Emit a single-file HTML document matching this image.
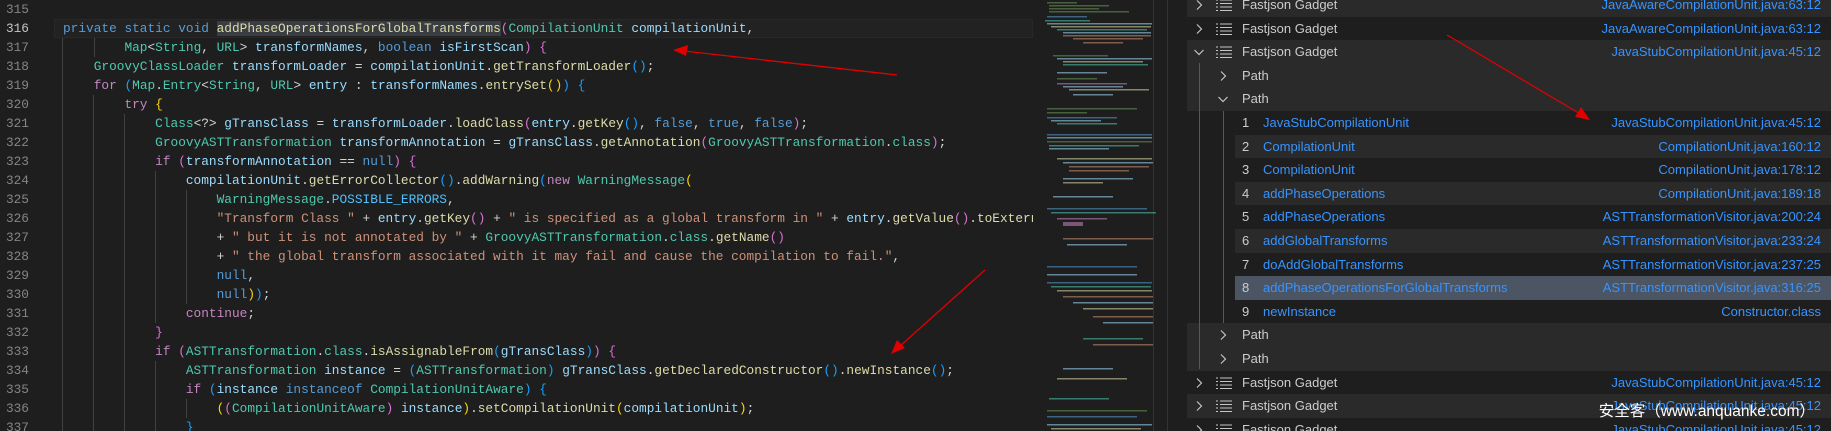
<!DOCTYPE html>
<html><head><meta charset="utf-8">
<style>
*{margin:0;padding:0;box-sizing:border-box}
body{width:1831px;height:431px;overflow:hidden;background:#1e1e1e;position:relative;font-family:"Liberation Sans",sans-serif}
#ed{position:absolute;left:0;top:0;width:1033px;height:431px;overflow:hidden;background:#1e1e1e}
.ln{position:absolute;left:0;width:29px;text-align:right;font:12.8px/19px "Liberation Mono",monospace;color:#858585}
.cl{position:absolute;left:63px;white-space:pre;font:12.8px/19px "Liberation Mono",monospace;color:#d4d4d4}
.g{position:absolute;width:1px;height:19px;background:#404040}
.k{color:#569cd6}.c{color:#c586c0}.t{color:#4ec9b0}.v{color:#9cdcfe}.f{color:#dcdcaa}.s{color:#ce9178}.n{color:#4fc1ff}
.b1{color:#ffd700}.b2{color:#da70d6}.b3{color:#179fff}
.sel{background:#3a3d41}
#mm{position:absolute;left:1033px;top:0;width:154px;height:431px;background:#1e1e1e}
#pn{position:absolute;left:1187px;top:0;width:644px;height:431px;background:#1e1e1e;overflow:hidden}
.r{position:absolute;left:0;width:644px;height:23.6px;font-size:13px;line-height:23.6px;color:#cccccc}
.lt{background:#2a2a2a}
.r .tx{position:absolute}
.r .rt{position:absolute;right:10px;color:#3794ff}
.r .bl{color:#3794ff}
.ibg{position:absolute;left:48px;right:0;top:0;bottom:0}
</style></head><body>
<div id="ed">
<div style="position:absolute;left:54px;top:19px;width:979px;height:19px;border:1px solid #282828;background:#222"></div>
<div class="ln" style="top:0">315</div>
<div class="ln" style="top:19px;color:#c6c6c6">316</div>
<div class="ln" style="top:38px">317</div>
<div class="ln" style="top:57px">318</div>
<div class="ln" style="top:76px">319</div>
<div class="ln" style="top:95px">320</div>
<div class="ln" style="top:114px">321</div>
<div class="ln" style="top:133px">322</div>
<div class="ln" style="top:152px">323</div>
<div class="ln" style="top:171px">324</div>
<div class="ln" style="top:190px">325</div>
<div class="ln" style="top:209px">326</div>
<div class="ln" style="top:228px">327</div>
<div class="ln" style="top:247px">328</div>
<div class="ln" style="top:266px">329</div>
<div class="ln" style="top:285px">330</div>
<div class="ln" style="top:304px">331</div>
<div class="ln" style="top:323px">332</div>
<div class="ln" style="top:342px">333</div>
<div class="ln" style="top:361px">334</div>
<div class="ln" style="top:380px">335</div>
<div class="ln" style="top:399px">336</div>
<div class="ln" style="top:418px">337</div>

<!-- indent guides -->
<div class="g" style="left:94px;top:38px"></div>
<div class="g" style="left:62px;top:38px;height:399px"></div>
<div class="g" style="left:93px;top:95px;height:342px"></div>
<div class="g" style="left:124px;top:114px;height:323px"></div>
<div class="g" style="left:155px;top:171px;height:152px"></div>
<div class="g" style="left:186px;top:190px;height:114px"></div>
<div class="g" style="left:155px;top:361px;height:76px"></div>
<div class="g" style="left:186px;top:399px;height:19px"></div>

<div class="cl" style="top:19px"><span class="k">private</span> <span class="k">static</span> <span class="k">void</span> <span class="f sel">addPhaseOperationsForGlobalTransforms</span><span class="b2">(</span><span class="t">CompilationUnit</span> <span class="v">compilationUnit</span>,</div>
<div class="cl" style="top:38px">        <span class="t">Map</span>&lt;<span class="t">String</span>, <span class="t">URL</span>&gt; <span class="v">transformNames</span>, <span class="k">boolean</span> <span class="v">isFirstScan</span><span class="b2">)</span> <span class="b2">{</span></div>
<div class="cl" style="top:57px">    <span class="t">GroovyClassLoader</span> <span class="v">transformLoader</span> = <span class="v">compilationUnit</span>.<span class="f">getTransformLoader</span><span class="b3">()</span>;</div>
<div class="cl" style="top:76px">    <span class="c">for</span> <span class="b3">(</span><span class="t">Map</span>.<span class="t">Entry</span>&lt;<span class="t">String</span>, <span class="t">URL</span>&gt; <span class="v">entry</span> : <span class="v">transformNames</span>.<span class="f">entrySet</span><span class="b1">()</span><span class="b3">)</span> <span class="b3">{</span></div>
<div class="cl" style="top:95px">        <span class="c">try</span> <span class="b1">{</span></div>
<div class="cl" style="top:114px">            <span class="t">Class</span>&lt;?&gt; <span class="v">gTransClass</span> = <span class="v">transformLoader</span>.<span class="f">loadClass</span><span class="b2">(</span><span class="v">entry</span>.<span class="f">getKey</span><span class="b3">()</span>, <span class="k">false</span>, <span class="k">true</span>, <span class="k">false</span><span class="b2">)</span>;</div>
<div class="cl" style="top:133px">            <span class="t">GroovyASTTransformation</span> <span class="v">transformAnnotation</span> = <span class="v">gTransClass</span>.<span class="f">getAnnotation</span><span class="b2">(</span><span class="t">GroovyASTTransformation</span>.<span class="t">class</span><span class="b2">)</span>;</div>
<div class="cl" style="top:152px">            <span class="c">if</span> <span class="b2">(</span><span class="v">transformAnnotation</span> == <span class="k">null</span><span class="b2">)</span> <span class="b2">{</span></div>
<div class="cl" style="top:171px">                <span class="v">compilationUnit</span>.<span class="f">getErrorCollector</span><span class="b3">()</span>.<span class="f">addWarning</span><span class="b3">(</span><span class="c">new</span> <span class="t">WarningMessage</span><span class="b1">(</span></div>
<div class="cl" style="top:190px">                    <span class="t">WarningMessage</span>.<span class="n">POSSIBLE_ERRORS</span>,</div>
<div class="cl" style="top:209px">                    <span class="s">"Transform Class "</span> + <span class="v">entry</span>.<span class="f">getKey</span><span class="b2">()</span> + <span class="s">" is specified as a global transform in "</span> + <span class="v">entry</span>.<span class="f">getValue</span><span class="b2">()</span>.<span class="f">toExternalForm</span><span class="b2">()</span></div>
<div class="cl" style="top:228px">                    + <span class="s">" but it is not annotated by "</span> + <span class="t">GroovyASTTransformation</span>.<span class="t">class</span>.<span class="f">getName</span><span class="b2">()</span></div>
<div class="cl" style="top:247px">                    + <span class="s">" the global transform associated with it may fail and cause the compilation to fail."</span>,</div>
<div class="cl" style="top:266px">                    <span class="k">null</span>,</div>
<div class="cl" style="top:285px">                    <span class="k">null</span><span class="b1">)</span><span class="b3">)</span>;</div>
<div class="cl" style="top:304px">                <span class="c">continue</span>;</div>
<div class="cl" style="top:323px">            <span class="b2">}</span></div>
<div class="cl" style="top:342px">            <span class="c">if</span> <span class="b2">(</span><span class="t">ASTTransformation</span>.<span class="t">class</span>.<span class="f">isAssignableFrom</span><span class="b3">(</span><span class="v">gTransClass</span><span class="b3">)</span><span class="b2">)</span> <span class="b2">{</span></div>
<div class="cl" style="top:361px">                <span class="t">ASTTransformation</span> <span class="v">instance</span> = <span class="b3">(</span><span class="t">ASTTransformation</span><span class="b3">)</span> <span class="v">gTransClass</span>.<span class="f">getDeclaredConstructor</span><span class="b3">()</span>.<span class="f">newInstance</span><span class="b3">()</span>;</div>
<div class="cl" style="top:380px">                <span class="c">if</span> <span class="b3">(</span><span class="v">instance</span> <span class="k">instanceof</span> <span class="t">CompilationUnitAware</span><span class="b3">)</span> <span class="b3">{</span></div>
<div class="cl" style="top:399px">                    <span class="b1">(</span><span class="b2">(</span><span class="t">CompilationUnitAware</span><span class="b2">)</span> <span class="v">instance</span><span class="b1">)</span>.<span class="f">setCompilationUnit</span><span class="b1">(</span><span class="v">compilationUnit</span><span class="b1">)</span>;</div>
<div class="cl" style="top:418px">                <span class="b3">}</span></div>
</div>

<div id="mm">
<svg width="154" height="431" style="position:absolute;left:0;top:0">
<line x1="120.5" y1="0" x2="120.5" y2="431" stroke="#333"/>
<line x1="134.5" y1="0" x2="134.5" y2="431" stroke="#333"/>
<g opacity="0.55">
<rect x="14" y="2" width="30" height="1.5" fill="#6a9955"/><rect x="16" y="5" width="60" height="1.5" fill="#6a9955"/><rect x="16" y="8" width="50" height="1.5" fill="#6a9955"/><rect x="16" y="11" width="80" height="1.5" fill="#6a9955"/>
<rect x="14" y="16" width="40" height="1.5" fill="#569cd6"/>
<rect x="12" y="20" width="45" height="1.5" fill="#4ec9b0"/><rect x="14" y="23" width="105" height="1.5" fill="#9cdcfe"/><rect x="18" y="26" width="100" height="1.5" fill="#dcdcaa"/><rect x="24" y="29" width="90" height="1.5" fill="#4ec9b0"/><rect x="30" y="32" width="88" height="1.5" fill="#9cdcfe"/><rect x="30" y="35" width="88" height="1.5" fill="#ce9178"/><rect x="40" y="38" width="70" height="1.5" fill="#ce9178"/><rect x="50" y="42" width="40" height="1.5" fill="#ce9178"/>
<rect x="20" y="55" width="55" height="1.5" fill="#6a9955"/><rect x="24" y="58" width="95" height="1.5" fill="#9cdcfe"/><rect x="30" y="61" width="80" height="1.5" fill="#dcdcaa"/><rect x="30" y="64" width="85" height="1.5" fill="#4ec9b0"/>
<rect x="24" y="72" width="50" height="1.5" fill="#9cdcfe"/><rect x="24" y="78" width="40" height="1.5" fill="#6a9955"/>
<rect x="24" y="83" width="70" height="1.5" fill="#c586c0"/><rect x="30" y="86" width="60" height="1.5" fill="#9cdcfe"/><rect x="36" y="89" width="80" height="1.5" fill="#dcdcaa"/><rect x="40" y="94" width="40" height="1.5" fill="#9cdcfe"/>
<rect x="14" y="108" width="90" height="1.5" fill="#6a9955"/><rect x="14" y="112" width="40" height="1.5" fill="#6a9955"/>
<rect x="14" y="117" width="70" height="1.5" fill="#569cd6"/><rect x="18" y="120" width="50" height="1.5" fill="#9cdcfe"/><rect x="24" y="123" width="60" height="1.5" fill="#4ec9b0"/>
<rect x="14" y="134" width="105" height="1.5" fill="#569cd6"/><rect x="14" y="137" width="105" height="1.5" fill="#9cdcfe"/>
<rect x="14" y="141" width="105" height="1.5" fill="#6a9955"/><rect x="16" y="145" width="90" height="1.5" fill="#4ec9b0"/><rect x="16" y="148" width="60" height="1.5" fill="#9cdcfe"/>
<rect x="24" y="158" width="95" height="1.5" fill="#dcdcaa"/><rect x="30" y="162" width="90" height="1.5" fill="#9cdcfe"/><rect x="36" y="166" width="80" height="1.5" fill="#ce9178"/><rect x="36" y="170" width="60" height="1.5" fill="#ce9178"/>
<rect x="30" y="178" width="70" height="1.5" fill="#9cdcfe"/><rect x="30" y="182" width="40" height="1.5" fill="#dcdcaa"/><rect x="20" y="196" width="60" height="1.5" fill="#9cdcfe"/>
<rect x="14" y="208" width="100" height="1.5" fill="#569cd6"/><rect x="18" y="212" width="105" height="1.5" fill="#4ec9b0"/><rect x="24" y="218" width="50" height="1.5" fill="#c586c0"/><rect x="30" y="222" width="20" height="4" fill="#c586c0"/><rect x="30" y="238" width="90" height="1.5" fill="#ce9178"/><rect x="34" y="244" width="60" height="1.5" fill="#9cdcfe"/>
<rect x="14" y="266" width="90" height="1.5" fill="#569cd6"/><rect x="14" y="274" width="90" height="1.5" fill="#9cdcfe"/>
<rect x="14" y="282" width="105" height="1.5" fill="#569cd6"/><rect x="18" y="286" width="100" height="1.5" fill="#4ec9b0"/><rect x="24" y="290" width="95" height="1.5" fill="#dcdcaa"/><rect x="30" y="296" width="90" height="1.5" fill="#ce9178"/><rect x="40" y="302" width="80" height="1.5" fill="#9cdcfe"/><rect x="50" y="308" width="70" height="1.5" fill="#dcdcaa"/><rect x="60" y="316" width="60" height="1.5" fill="#ce9178"/><rect x="70" y="322" width="50" height="1.5" fill="#9cdcfe"/>
<rect x="50" y="338" width="60" height="1.5" fill="#4ec9b0"/><rect x="60" y="344" width="60" height="1.5" fill="#ce9178"/><rect x="30" y="368" width="50" height="1.5" fill="#9cdcfe"/><rect x="24" y="378" width="70" height="1.5" fill="#dcdcaa"/>
<rect x="16" y="398" width="60" height="1.5" fill="#4ec9b0"/><rect x="14" y="410" width="100" height="1.5" fill="#6a9955"/><rect x="14" y="416" width="90" height="1.5" fill="#569cd6"/><rect x="14" y="424" width="105" height="1.5" fill="#9cdcfe"/><rect x="18" y="428" width="90" height="1.5" fill="#dcdcaa"/>
</g>
</svg>
</div>

<div id="pn">
<svg width="0" height="0" style="position:absolute"><defs>
<symbol id="cr" viewBox="0 0 10 12"><polyline points="3,1.5 7.5,6 3,10.5" fill="none" stroke="#c5c5c5" stroke-width="1.2"/></symbol>
<symbol id="cd" viewBox="0 0 12 10"><polyline points="1.5,3 6,7.5 10.5,3" fill="none" stroke="#c5c5c5" stroke-width="1.2"/></symbol>
<symbol id="li" viewBox="0 0 16 14"><g fill="#c5c5c5"><rect x="0" y="1.5" width="2" height="1"/><rect x="4" y="1.5" width="12" height="1"/><rect x="0" y="5" width="2" height="1"/><rect x="4" y="5" width="12" height="1"/><rect x="0" y="8.5" width="2" height="1"/><rect x="4" y="8.5" width="12" height="1"/><rect x="0" y="12" width="2" height="1"/><rect x="4" y="12" width="12" height="1"/></g></symbol>
</defs></svg>

<div class="r lt" style="top:-7px"><svg style="position:absolute;left:7px;top:6px" width="10" height="12"><use href="#cr"/></svg><svg style="position:absolute;left:29px;top:5px" width="16" height="14"><use href="#li"/></svg><span class="tx" style="left:55px">Fastjson Gadget</span><span class="rt">JavaAwareCompilationUnit.java:63:12</span></div>
<div class="r" style="top:16.6px"><svg style="position:absolute;left:7px;top:6px" width="10" height="12"><use href="#cr"/></svg><svg style="position:absolute;left:29px;top:5px" width="16" height="14"><use href="#li"/></svg><span class="tx" style="left:55px">Fastjson Gadget</span><span class="rt">JavaAwareCompilationUnit.java:63:12</span></div>
<div class="r lt" style="top:40.2px"><svg style="position:absolute;left:6px;top:7px" width="12" height="10"><use href="#cd"/></svg><svg style="position:absolute;left:29px;top:5px" width="16" height="14"><use href="#li"/></svg><span class="tx" style="left:55px">Fastjson Gadget</span><span class="rt">JavaStubCompilationUnit.java:45:12</span></div>
<div class="r lt" style="top:63.8px"><svg style="position:absolute;left:31px;top:6px" width="10" height="12"><use href="#cr"/></svg><span class="tx" style="left:55px">Path</span></div>
<div class="r lt" style="top:87.4px"><svg style="position:absolute;left:30px;top:7px" width="12" height="10"><use href="#cd"/></svg><span class="tx" style="left:55px">Path</span></div>
<div class="r" style="top:111px"><span class="tx" style="left:55px">1</span><span class="tx bl" style="left:76px">JavaStubCompilationUnit</span><span class="rt">JavaStubCompilationUnit.java:45:12</span></div>
<div class="r" style="top:134.6px"><div class="ibg lt"></div><span class="tx" style="left:55px">2</span><span class="tx bl" style="left:76px">CompilationUnit</span><span class="rt">CompilationUnit.java:160:12</span></div>
<div class="r" style="top:158.2px"><span class="tx" style="left:55px">3</span><span class="tx bl" style="left:76px">CompilationUnit</span><span class="rt">CompilationUnit.java:178:12</span></div>
<div class="r" style="top:181.8px"><div class="ibg lt"></div><span class="tx" style="left:55px">4</span><span class="tx bl" style="left:76px">addPhaseOperations</span><span class="rt">CompilationUnit.java:189:18</span></div>
<div class="r" style="top:205.4px"><span class="tx" style="left:55px">5</span><span class="tx bl" style="left:76px">addPhaseOperations</span><span class="rt">ASTTransformationVisitor.java:200:24</span></div>
<div class="r" style="top:229px"><div class="ibg lt"></div><span class="tx" style="left:55px">6</span><span class="tx bl" style="left:76px">addGlobalTransforms</span><span class="rt">ASTTransformationVisitor.java:233:24</span></div>
<div class="r" style="top:252.6px"><span class="tx" style="left:55px">7</span><span class="tx bl" style="left:76px">doAddGlobalTransforms</span><span class="rt">ASTTransformationVisitor.java:237:25</span></div>
<div class="r" style="top:276.2px"><div class="ibg" style="background:#4b5563"></div><span class="tx" style="left:55px">8</span><span class="tx bl" style="left:76px">addPhaseOperationsForGlobalTransforms</span><span class="rt">ASTTransformationVisitor.java:316:25</span></div>
<div class="r" style="top:299.8px"><span class="tx" style="left:55px">9</span><span class="tx bl" style="left:76px">newInstance</span><span class="rt">Constructor.class</span></div>
<div class="r lt" style="top:323.4px"><svg style="position:absolute;left:31px;top:6px" width="10" height="12"><use href="#cr"/></svg><span class="tx" style="left:55px">Path</span></div>
<div class="r lt" style="top:347px"><svg style="position:absolute;left:31px;top:6px" width="10" height="12"><use href="#cr"/></svg><span class="tx" style="left:55px">Path</span></div>
<div class="r" style="top:370.6px"><svg style="position:absolute;left:7px;top:6px" width="10" height="12"><use href="#cr"/></svg><svg style="position:absolute;left:29px;top:5px" width="16" height="14"><use href="#li"/></svg><span class="tx" style="left:55px">Fastjson Gadget</span><span class="rt">JavaStubCompilationUnit.java:45:12</span></div>
<div class="r lt" style="top:394.2px"><svg style="position:absolute;left:7px;top:6px" width="10" height="12"><use href="#cr"/></svg><svg style="position:absolute;left:29px;top:5px" width="16" height="14"><use href="#li"/></svg><span class="tx" style="left:55px">Fastjson Gadget</span><span class="rt">JavaStubCompilationUnit.java:45:12</span></div>
<div class="r" style="top:417.8px"><svg style="position:absolute;left:7px;top:6px" width="10" height="12"><use href="#cr"/></svg><svg style="position:absolute;left:29px;top:5px" width="16" height="14"><use href="#li"/></svg><span class="tx" style="left:55px">Fastjson Gadget</span><span class="rt">JavaStubCompilationUnit.java:45:12</span></div>
<div style="position:absolute;left:12px;top:63px;width:1px;height:306px;background:#585858"></div>
<div style="position:absolute;left:36px;top:111px;width:1px;height:212px;background:#585858"></div>
</div>

<svg width="1831" height="431" style="position:absolute;left:0;top:0">
<g stroke="#e00000" stroke-width="1.3" fill="#e00000">
<line x1="897" y1="75" x2="684" y2="51"/><polygon points="673,50 688,45 686,56" stroke="none"/>
<line x1="985" y1="270" x2="899" y2="347"/><polygon points="891,354 897,340 905,348" stroke="none"/>
<line x1="1447" y1="35" x2="1582" y2="115"/><polygon points="1590,120 1575,117 1581,107" stroke="none"/>
</g>
</svg>
<div style="position:absolute;right:16px;top:402px;color:#fff;font:15.5px/20px 'Liberation Sans','Noto Sans CJK SC',sans-serif;white-space:nowrap">安全客（www.anquanke.com）</div>
</body></html>
